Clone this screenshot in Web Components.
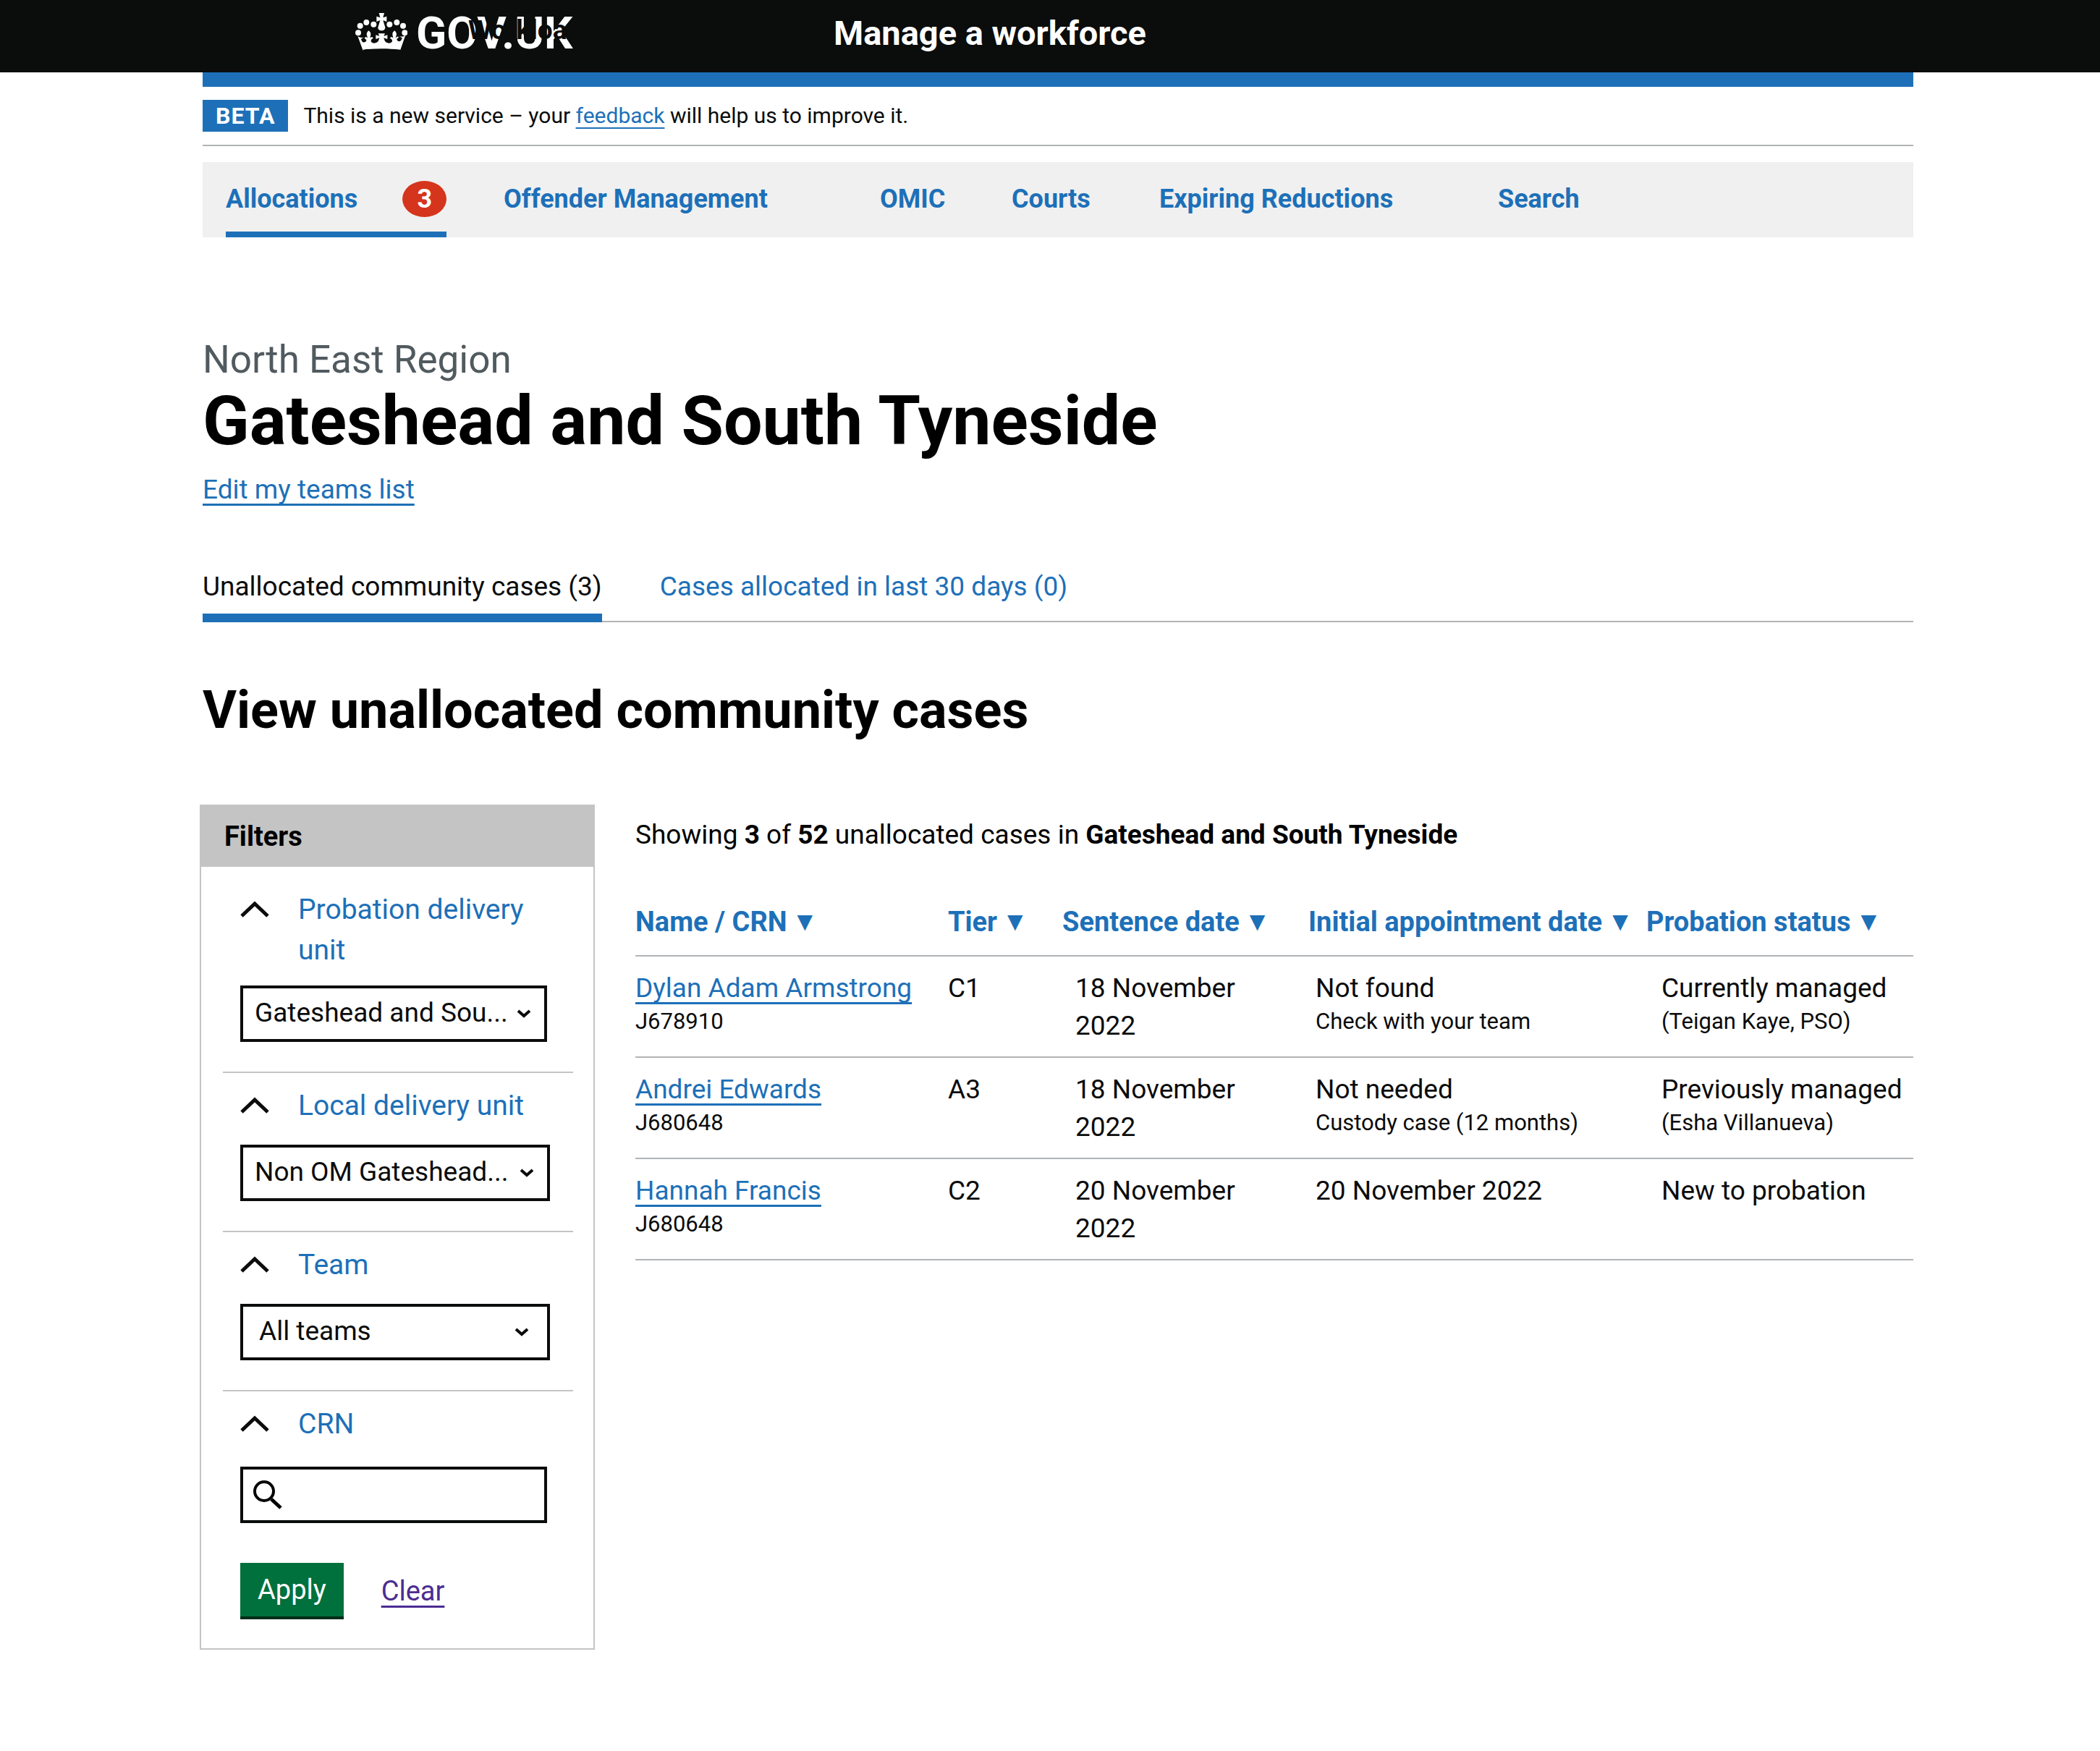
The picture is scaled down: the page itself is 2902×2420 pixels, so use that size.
<!DOCTYPE html>
<html lang="en">
<head>
<meta charset="utf-8">
<title>Manage a workforce</title>
<style>
  body { margin: 0; background: #fff; color: #0b0c0c; font-family: Roboto, "Noto Sans", sans-serif; font-size: 37px; line-height: 52px; }
  main { display: block; padding: 0 258px 0 280px; }
  .columns { display: flex; align-items: flex-start; gap: 56px; margin: 85px 0 0 -4px; }
  .columns case-results { flex: 1; min-width: 0; }
</style>
</head>
<body>
<gov-header>Manage a workforce</gov-header>
<main>
  <phase-banner tag="BETA">This is a new service – your <a href="#feedback">feedback</a> will help us to improve it.</phase-banner>
  <primary-nav>
    <nav-item count="3" current>Allocations</nav-item>
    <nav-item>Offender Management</nav-item>
    <nav-item>OMIC</nav-item>
    <nav-item>Courts</nav-item>
    <nav-item>Expiring Reductions</nav-item>
    <nav-item>Search</nav-item>
  </primary-nav>
  <page-title>
    <span slot="caption">North East Region</span>
    Gateshead and South Tyneside
    <a slot="action" href="#teams">Edit my teams list</a>
  </page-title>
  <sub-nav>
    <a href="#unallocated" aria-current="page">Unallocated community cases (3)</a>
    <a href="#allocated">Cases allocated in last 30 days (0)</a>
  </sub-nav>
  <section-title>View unallocated community cases</section-title>
  <div class="columns">
    <filter-panel heading="Filters">
      <filter-select class="first" label="Probation delivery unit" value="Gateshead and Sou..."></filter-select>
      <filter-select class="wide" label="Local delivery unit" value="Non OM Gateshead..."></filter-select>
      <filter-select class="wide short" label="Team" value="All teams"></filter-select>
      <filter-search label="CRN"></filter-search>
    </filter-panel>
    <case-results>
      <span slot="summary">Showing <b>3</b> of <b>52</b> unallocated cases in <b>Gateshead and South Tyneside</b></span>
    </case-results>
  </div>
</main>

<script>
const base = `
  *, *::before, *::after { box-sizing: border-box; }
  :host { display: block; }
  :host { --blue: #1d70b8; --line: #b1b4b6; --ink: #0b0c0c; }
  a { color: var(--blue); text-decoration: underline; text-decoration-thickness: 3px; text-underline-offset: 7px; text-decoration-skip-ink: none; }
  button, select, input { font: inherit; color: inherit; margin: 0; border-radius: 0; }
`;
const define = (name, render) => customElements.define(name, class extends HTMLElement {
  constructor() {
    super();
    this.attachShadow({ mode: 'open' });
  }
  connectedCallback() {
    this.shadowRoot.innerHTML = render(this);
  }
});

define('gov-header', () => `<style>${base}
  header { display: flex; align-items: center; height: 100px; padding: 0 258px 8px 490px; background: var(--ink); color: #fff; }
  .logo { position: relative; display: flex; align-items: center; flex: 0 0 662px; color: #fff; text-decoration: none; font-weight: 700; font-size: 62px; line-height: 92px; }
  .logo svg { width: 72px; height: 52px; margin-right: 12px; margin-left: 1px; margin-bottom: 4px; fill: #fff; }
  .product { position: absolute; left: 157px; top: 16px; font-size: 37px; line-height: 52px; color: var(--ink); }
  .service { font-size: 47px; line-height: 92px; font-weight: 700; color: #fff; text-decoration: none; }
</style>
<header>
  <a class="logo" href="#home">
    <svg viewBox="0 0 216 156" aria-hidden="true">
      <circle cx="12" cy="82" r="12"/><circle cx="20" cy="53" r="12"/><circle cx="46" cy="39" r="12"/><circle cx="76" cy="47" r="12"/>
      <circle cx="142" cy="47" r="12"/><circle cx="172" cy="39" r="12"/><circle cx="198" cy="53" r="12"/><circle cx="205" cy="82" r="12"/>
      <path d="M98 0h22l-5 19 15-5v22l-15-6 8 26c4 10-5 17-14 17s-18-7-14-17l8-26-15 6V14l15 5z"/>
      <path d="M32 156 10 96c7 5 14 7 26 5l-12 6c2 13 10 19 20 11 4-5 1-9-5-12-2-7 7-9 12-2-1-8-4-11-4-17 1-6 4-10 8-14 5 4 9 8 9 14s-2 10-3 17c5-7 14-5 12 2-7 3-10 8-7 13 6 9 24 8 30-4 2-5 3-8 4-12l-15 5V91l15 5-5-11h28l-5 11 15-5v17l-15-5c1 4 2 7 4 12 6 12 24 13 30 4 3-5 0-10-7-13-2-7 7-9 12-2-1-7-3-11-3-17s4-10 9-14c4 4 7 8 8 14 0 6-3 9-4 17 5-7 14-9 12-2-6 3-9 7-5 12 10 8 18 2 20-11l-12-6c12 2 19 0 26-5l-21 60c-50-6-104-6-154 0z"/>
    </svg>
    <span>GOV.UK</span>
    <span class="product">Workload</span>
  </a>
  <a class="service" href="#service"><slot></slot></a>
</header>`);

define('phase-banner', el => `<style>${base}
  :host { border-top: 20px solid #1d70b8; }
  .row { display: flex; align-items: center; gap: 21px; height: 82px; border-bottom: 2px solid var(--line); font-size: 30px; line-height: 44px; }
  .tag { padding: 0 18px; background: var(--blue); color: #fff; font-size: 32px; font-weight: 700; letter-spacing: 1px; }
  ::slotted(a) { color: #1d70b8; text-decoration-thickness: 2px; text-underline-offset: 6px; text-decoration-skip-ink: none; }
</style>
<div class="row"><strong class="tag">${el.getAttribute('tag')}</strong><span><slot></slot></span></div>`);

define('primary-nav', () => `<style>${base}
  nav { display: grid; grid-template-columns: 384px 520px 182px 204px 468px auto; margin-top: 22px; padding: 0 32px; background: #f0f0f0; }
</style>
<nav><slot></slot></nav>`);

define('nav-item', el => `<style>${base}
  a { display: inline-flex; align-items: center; gap: 62px; height: 104px; padding-top: 5px; border-bottom: 8px solid transparent; font-size: 36px; line-height: 50px; font-weight: 700; text-decoration: none; }
  :host([current]) a { border-color: var(--blue); }
  .count { width: 61px; height: 50px; border-radius: 50%; background: #d4351c; color: #fff; text-align: center; }
</style>
<a href="#nav"><slot></slot>${el.hasAttribute('count') ? `<span class="count">${el.getAttribute('count')}</span>` : ''}</a>`);

define('page-title', () => `<style>${base}
  .caption { margin-top: 139px; font-size: 53px; line-height: 60px; color: #505a5f; }
  h1 { margin: 0; font-size: 95px; line-height: 110px; font-weight: 700; color: #000; }
  .action { margin-top: 14px; }
  ::slotted(a) { color: #1d70b8; text-decoration-thickness: 3px; text-underline-offset: 7px; text-decoration-skip-ink: none; }
</style>
<div class="caption"><slot name="caption"></slot></div>
<h1><slot></slot></h1>
<div class="action"><slot name="action"></slot></div>`);

define('sub-nav', () => `<style>${base}
  nav { display: flex; gap: 80px; margin-top: 82px; box-shadow: inset 0 -2px var(--line); }
  ::slotted(a) { padding-bottom: 11px; border-bottom: 12px solid transparent; color: #1d70b8; text-decoration: none; }
  ::slotted(a[aria-current]) { border-color: #1d70b8; color: #0b0c0c; }
</style>
<nav><slot></slot></nav>`);

define('section-title', () => `<style>${base}
  h2 { margin: 77px 0 0; font-size: 72px; line-height: 90px; font-weight: 700; color: #000; }
</style>
<h2><slot></slot></h2>`);

define('filter-panel', el => `<style>${base}
  :host { flex: 0 0 546px; }
  form { border: 2px solid #c4c4c4; }
  h3 { margin: -2px -2px 0; padding: 18px 34px 16px; background: #c4c4c4; font-size: 38px; line-height: 52px; font-weight: 700; color: #000; }
  .body { padding: 14px 28px 0 30px; }
  .actions { display: flex; align-items: center; gap: 52px; padding: 55px 54px 40px; }
  button { height: 78px; padding: 0 24px 4px; border: 0; box-shadow: inset 0 -4px #002d18; background: #00703c; color: #fff; font-size: 38px; }
  .actions a { color: #4c2c92; font-size: 38px; }
</style>
<form>
  <h3>${el.getAttribute('heading')}</h3>
  <div class="body"><slot></slot></div>
  <div class="actions"><button type="button">Apply</button><a href="#clear">Clear</a></div>
</form>`);

const group = `${base}
  :host { padding: 17px 24px 0; }
  label { display: flex; gap: 40px; color: var(--blue); font-size: 39px; line-height: 56px; }
  label svg { flex: 0 0 40px; height: 56px; }
  svg { fill: none; stroke: var(--ink); }
  .field { position: relative; margin-top: 26px; width: 424px; height: 78px; }
  select, input { display: block; width: 100%; height: 100%; border: 4px solid var(--ink); background: #fff; appearance: none; }
`;
const chevron = `<svg viewBox="0 0 40 56" stroke-width="5" aria-hidden="true"><path d="M2 37 20 20 38 37"/></svg>`;

define('filter-select', el => `<style>${group}
  :host { padding-bottom: 41px; border-bottom: 2px solid #c4c4c4; }
  :host(.first) .field { margin-top: 21px; }
  :host(.wide) .field { width: 428px; }
  select { padding: 0 40px 2px 16px; }
  :host(.short) select { padding-left: 22px; }
  .arrow { position: absolute; right: 22px; top: 32px; width: 20px; height: 14px; pointer-events: none; }
  :host(.short) .arrow { right: 29px; }
</style>
<label for="field">${chevron}<span>${el.getAttribute('label')}</span></label>
<div class="field">
  <select id="field"><option>${el.getAttribute('value')}</option></select>
  <svg class="arrow" viewBox="0 0 20 14" stroke-width="4" aria-hidden="true"><path d="M2 3 10 10 18 3"/></svg>
</div>`);

define('filter-search', el => `<style>${group}
  .field { margin-top: 31px; }
  input { padding: 0 12px 0 60px; }
  .glass { position: absolute; left: 17px; top: 18px; width: 42px; height: 42px; stroke: #000; pointer-events: none; }
</style>
<label for="field">${chevron}<span>${el.getAttribute('label')}</span></label>
<div class="field">
  <input id="field" type="text">
  <svg class="glass" viewBox="0 0 42 42" aria-hidden="true"><circle cx="16" cy="16" r="13" stroke-width="4"/><path d="M26 27 39 39" stroke-width="5"/></svg>
</div>`);

const headings = ['Name / CRN', 'Tier', 'Sentence date', 'Initial appointment date', 'Probation status'];
const cases = [
  ['Dylan Adam Armstrong', 'J678910', 'C1', '18 November 2022', 'Not found', 'Check with your team', 'Currently managed', '(Teigan Kaye, PSO)'],
  ['Andrei Edwards', 'J680648', 'A3', '18 November 2022', 'Not needed', 'Custody case (12 months)', 'Previously managed', '(Esha Villanueva)'],
  ['Hannah Francis', 'J680648', 'C2', '20 November 2022', '20 November 2022', '', 'New to probation', '']
];
const small = text => text ? `<small>${text}</small>` : '';

define('case-results', () => `<style>${base}
  p { margin: 0; padding-top: 16px; color: #000; }
  table { width: 100%; margin-top: 68px; border-collapse: separate; border-spacing: 0; table-layout: fixed; }
  th, td { padding: 0; border-bottom: 2px solid var(--line); text-align: left; vertical-align: top; }
  th { padding-bottom: 20px; font-size: 38px; }
  td { padding: 18px 0 16px; }
  th button { display: flex; align-items: center; gap: 14px; padding: 0; border: 0; background: none; color: var(--blue); font-weight: 700; white-space: nowrap; }
  th span { font: 28px/52px "DejaVu Sans", sans-serif; }
  td:nth-child(3) { padding-left: 18px; padding-right: 60px; }
  td:nth-child(4) { padding-left: 10px; }
  td:nth-child(5) { padding-left: 21px; }
  small { display: block; font-size: 31px; line-height: 40px; }
</style>
<p><slot name="summary"></slot></p>
<table>
  <colgroup><col style="width:432px"><col style="width:158px"><col style="width:340px"><col style="width:467px"><col></colgroup>
  <thead><tr>${headings.map(h => `<th scope="col"><button type="button">${h}<span>▼</span></button></th>`).join('')}</tr></thead>
  <tbody>${cases.map(c => `<tr>
    <td><a href="#case">${c[0]}</a>${small(c[1])}</td><td>${c[2]}</td><td>${c[3]}</td>
    <td>${c[4]}${small(c[5])}</td><td>${c[6]}${small(c[7])}</td>
  </tr>`).join('')}</tbody>
</table>`);
</script>
</body>
</html>
